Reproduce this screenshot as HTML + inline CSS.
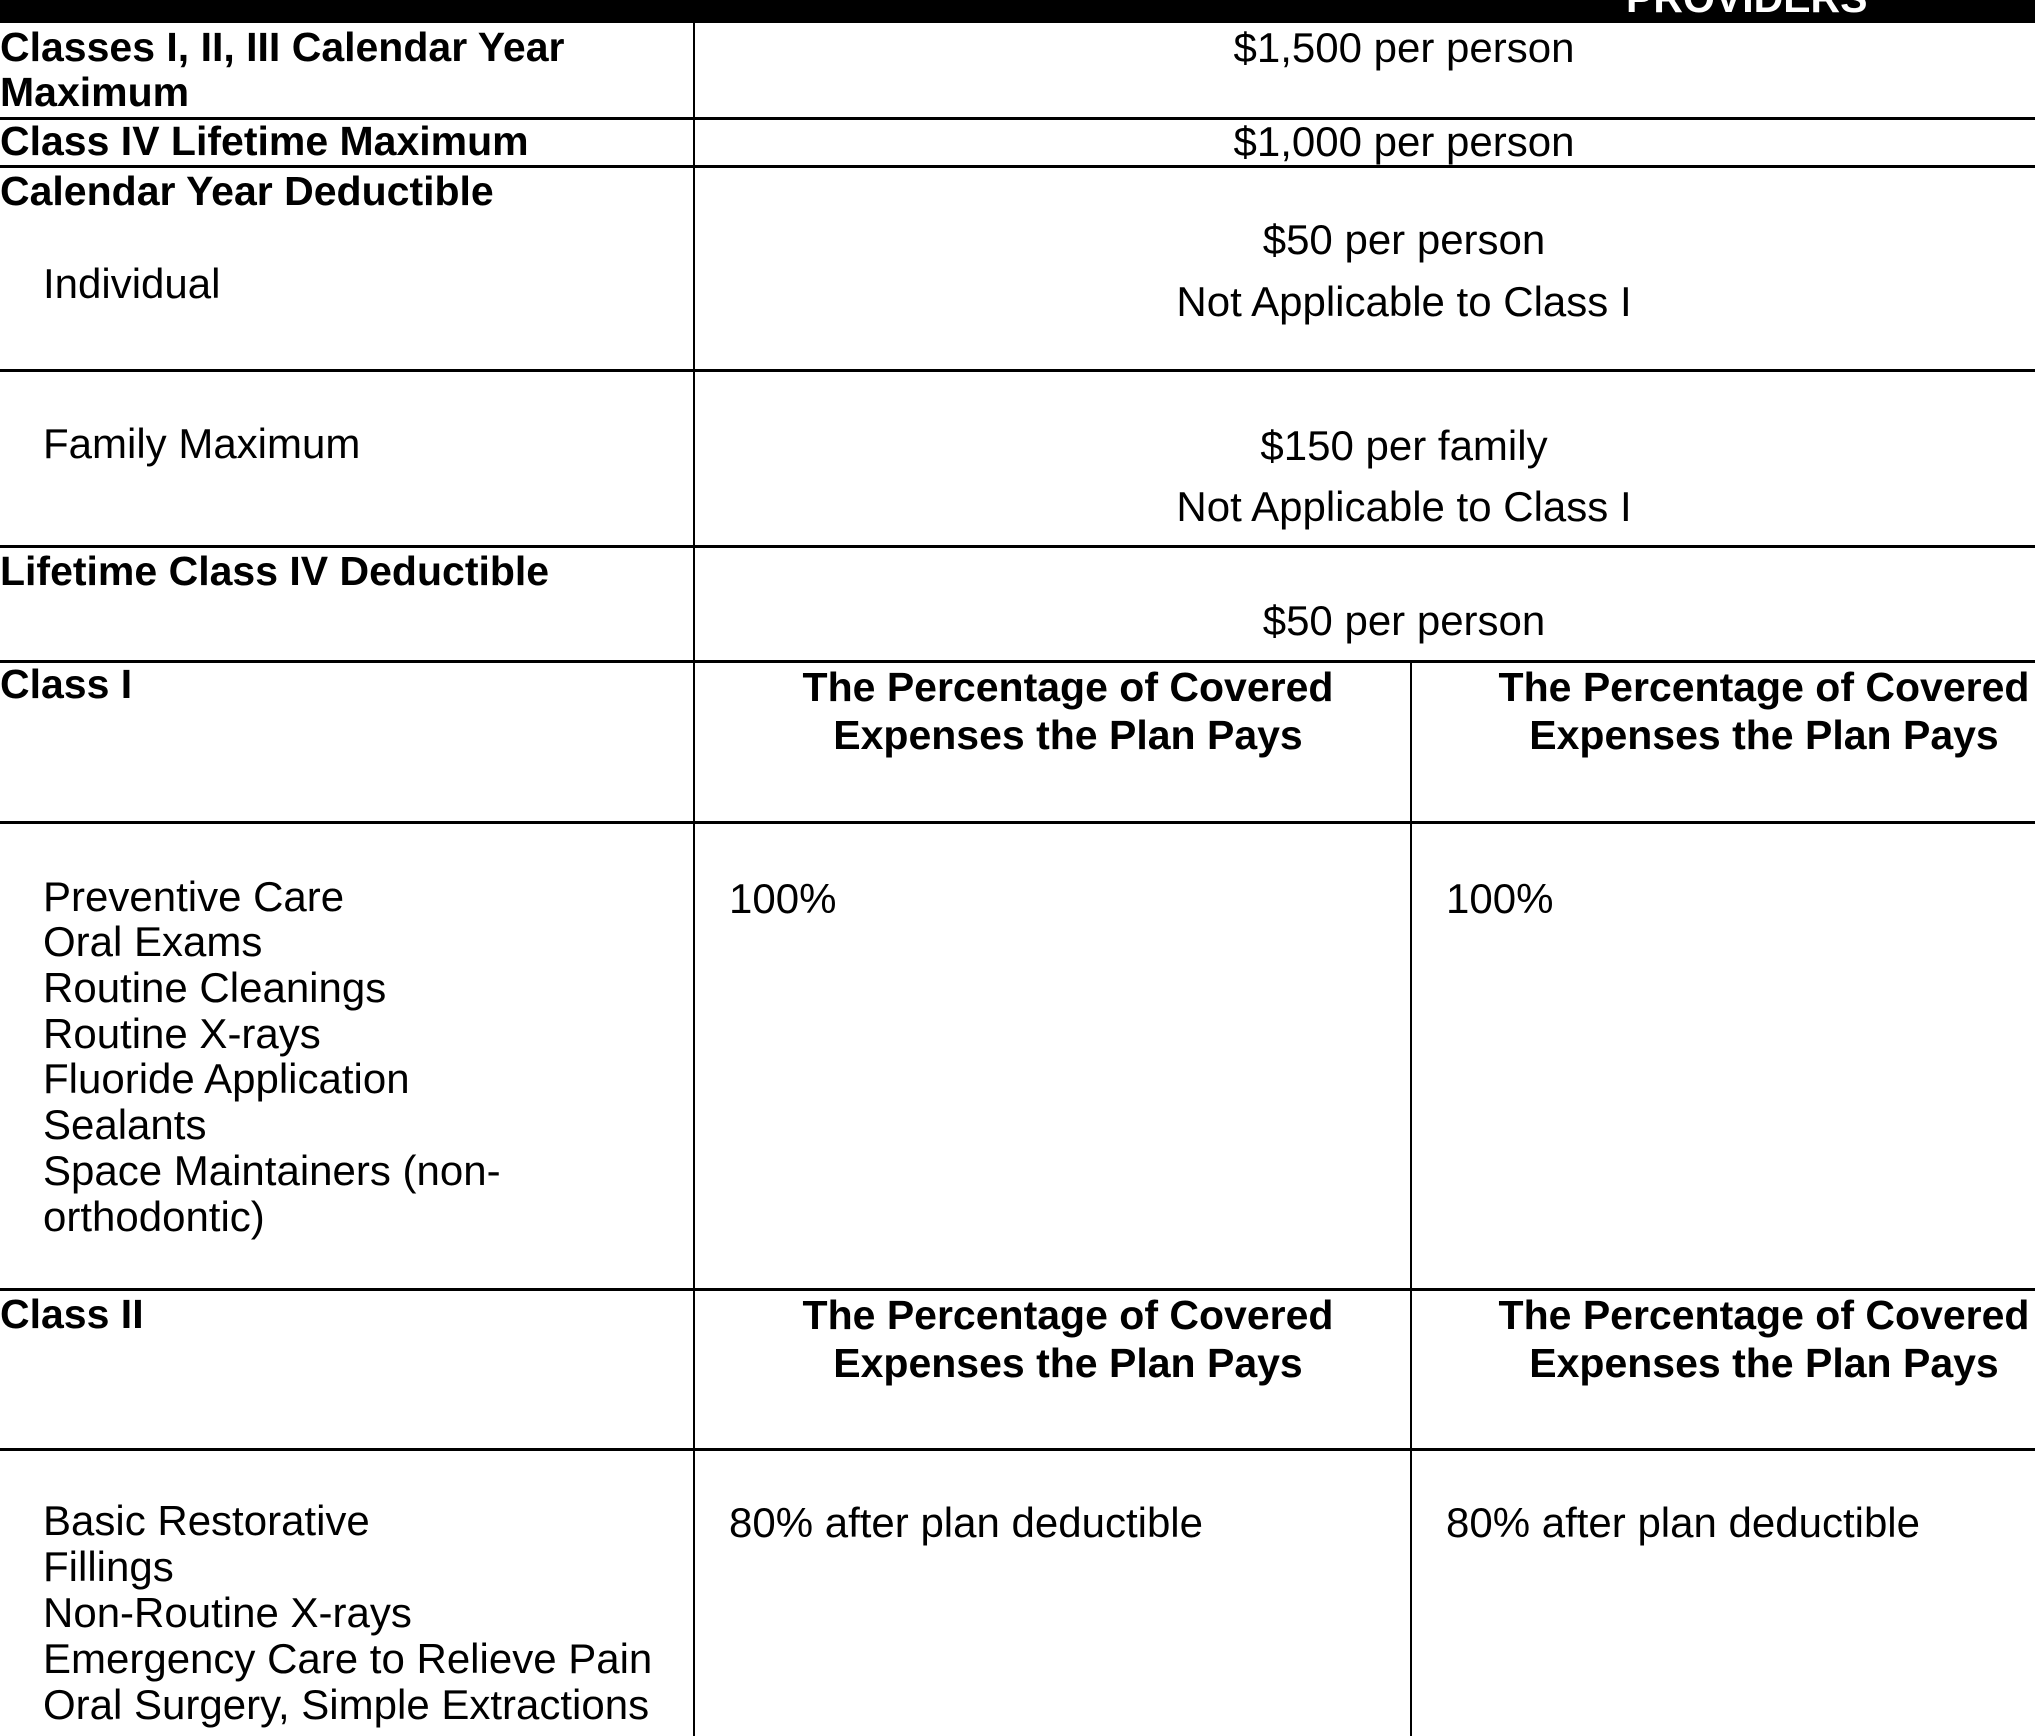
<!DOCTYPE html>
<html><head><meta charset="utf-8"><style>
html,body{margin:0;padding:0;background:#fff;width:2035px;height:1736px;overflow:hidden;position:relative}
div{position:absolute;white-space:nowrap;font-family:"Liberation Sans",Arial,sans-serif;color:#000;line-height:45px}
.b{font-weight:bold;font-size:41px}
.r{font-size:42px}
.c{text-align:center;width:1000px}
.h{left:0;width:2035px;height:3px;background:#000;line-height:0}
.v{width:2px;background:#000;line-height:0}
</style></head><body>
<div style="left:0;top:0;width:2035px;height:23px;background:#000;line-height:0"></div>
<div class="b" style="left:1626px;top:-24px;color:#fff">PROVIDERS</div>

<div class="h" style="top:117px"></div>
<div class="h" style="top:165px"></div>
<div class="h" style="top:369px"></div>
<div class="h" style="top:545px"></div>
<div class="h" style="top:660px"></div>
<div class="h" style="top:821px"></div>
<div class="h" style="top:1288px"></div>
<div class="h" style="top:1448px"></div>
<div class="v" style="left:693px;top:23px;height:1713px"></div>
<div class="v" style="left:1410px;top:661px;height:1075px"></div>

<div class="b" style="left:0;top:25px">Classes I, II, III Calendar Year</div>
<div class="b" style="left:0;top:70px">Maximum</div>
<div class="r c" style="left:904px;top:25px">$1,500 per person</div>
<div class="b" style="left:0;top:119px">Class IV Lifetime Maximum</div>
<div class="r c" style="left:904px;top:119px">$1,000 per person</div>
<div class="b" style="left:0;top:169px">Calendar Year Deductible</div>
<div class="r" style="left:43px;top:261px">Individual</div>
<div class="r c" style="left:904px;top:217px">$50 per person</div>
<div class="r c" style="left:904px;top:279px">Not Applicable to Class I</div>
<div class="r" style="left:43px;top:421px">Family Maximum</div>
<div class="r c" style="left:904px;top:423px">$150 per family</div>
<div class="r c" style="left:904px;top:484px">Not Applicable to Class I</div>
<div class="b" style="left:0;top:549px">Lifetime Class IV Deductible</div>
<div class="r c" style="left:904px;top:598px">$50 per person</div>

<div class="b" style="left:0;top:662px">Class I</div>
<div class="b c" style="left:568px;top:665px">The Percentage of Covered</div>
<div class="b c" style="left:568px;top:713px">Expenses the Plan Pays</div>
<div class="b c" style="left:1264px;top:665px">The Percentage of Covered</div>
<div class="b c" style="left:1264px;top:713px">Expenses the Plan Pays</div>
<div class="r" style="left:43px;top:874px">Preventive Care</div>
<div class="r" style="left:43px;top:919px">Oral Exams</div>
<div class="r" style="left:43px;top:965px">Routine Cleanings</div>
<div class="r" style="left:43px;top:1011px">Routine X-rays</div>
<div class="r" style="left:43px;top:1056px">Fluoride Application</div>
<div class="r" style="left:43px;top:1102px">Sealants</div>
<div class="r" style="left:43px;top:1148px">Space Maintainers (non-</div>
<div class="r" style="left:43px;top:1194px">orthodontic)</div>
<div class="r" style="left:729px;top:876px">100%</div>
<div class="r" style="left:1446px;top:876px">100%</div>

<div class="b" style="left:0;top:1292px">Class II</div>
<div class="b c" style="left:568px;top:1293px">The Percentage of Covered</div>
<div class="b c" style="left:568px;top:1341px">Expenses the Plan Pays</div>
<div class="b c" style="left:1264px;top:1293px">The Percentage of Covered</div>
<div class="b c" style="left:1264px;top:1341px">Expenses the Plan Pays</div>
<div class="r" style="left:43px;top:1498px">Basic Restorative</div>
<div class="r" style="left:43px;top:1544px">Fillings</div>
<div class="r" style="left:43px;top:1590px">Non-Routine X-rays</div>
<div class="r" style="left:43px;top:1636px">Emergency Care to Relieve Pain</div>
<div class="r" style="left:43px;top:1682px">Oral Surgery, Simple Extractions</div>
<div class="r" style="left:729px;top:1500px">80% after plan deductible</div>
<div class="r" style="left:1446px;top:1500px">80% after plan deductible</div>
</body></html>
